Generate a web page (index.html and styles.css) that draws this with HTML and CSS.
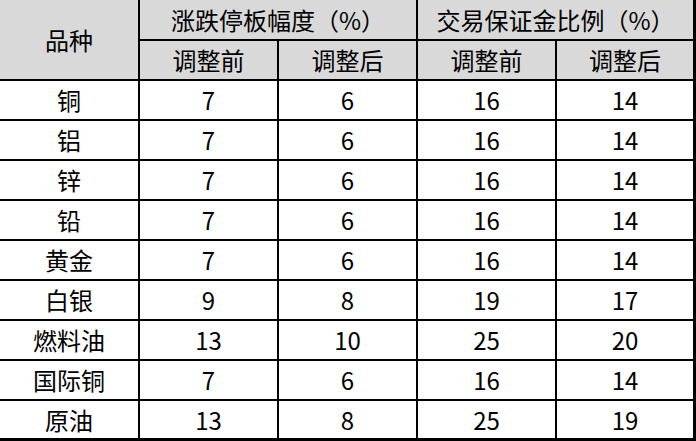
FILE: index.html
```html
<!DOCTYPE html>
<html lang="zh-CN">
<head>
<meta charset="utf-8">
<title>调整表</title>
<link rel="stylesheet" href="styles.css">
</head>
<body>
<div class="table">
  <div class="cell head span-rows">品种</div>
  <div class="cell head span-cols">涨跌停板幅度（%）</div>
  <div class="cell head span-cols last-col">交易保证金比例（%）</div>
  <div class="cell head">调整前</div>
  <div class="cell head">调整后</div>
  <div class="cell head">调整前</div>
  <div class="cell head last-col">调整后</div>

  <div class="cell">铜</div><div class="cell">7</div><div class="cell">6</div><div class="cell">16</div><div class="cell last-col">14</div>
  <div class="cell">铝</div><div class="cell">7</div><div class="cell">6</div><div class="cell">16</div><div class="cell last-col">14</div>
  <div class="cell">锌</div><div class="cell">7</div><div class="cell">6</div><div class="cell">16</div><div class="cell last-col">14</div>
  <div class="cell">铅</div><div class="cell">7</div><div class="cell">6</div><div class="cell">16</div><div class="cell last-col">14</div>
  <div class="cell">黄金</div><div class="cell">7</div><div class="cell">6</div><div class="cell">16</div><div class="cell last-col">14</div>
  <div class="cell">白银</div><div class="cell">9</div><div class="cell">8</div><div class="cell">19</div><div class="cell last-col">17</div>
  <div class="cell">燃料油</div><div class="cell">13</div><div class="cell">10</div><div class="cell">25</div><div class="cell last-col">20</div>
  <div class="cell">国际铜</div><div class="cell">7</div><div class="cell">6</div><div class="cell">16</div><div class="cell last-col">14</div>
  <div class="cell last-row">原油</div><div class="cell last-row">13</div><div class="cell last-row">8</div><div class="cell last-row">25</div><div class="cell last-row last-col">19</div>
</div>
</body>
</html>
```

FILE: styles.css
```css
html, body {
  margin: 0;
  padding: 0;
  background: #ffffff;
}

.table {
  display: grid;
  grid-template-columns: 140px 139px 139px 139px 139px;
  grid-template-rows: 41px 40px repeat(9, 40px);
  width: 696px;
  font-family: "Noto Sans CJK SC", "Noto Sans", sans-serif;
  font-size: 24px;
  color: #000000;
}

.cell {
  box-sizing: border-box;
  display: flex;
  align-items: center;
  justify-content: center;
  border-right: 2px solid #000000;
  border-bottom: 2px solid #000000;
  line-height: 1;
  white-space: nowrap;
}

.head {
  background: #d9d9d9;
}

.span-rows {
  grid-row: span 2;
}

.span-cols {
  grid-column: span 2;
}

.last-col {
  border-right-width: 3px;
}

.last-row {
  border-bottom-width: 3px;
}
```
